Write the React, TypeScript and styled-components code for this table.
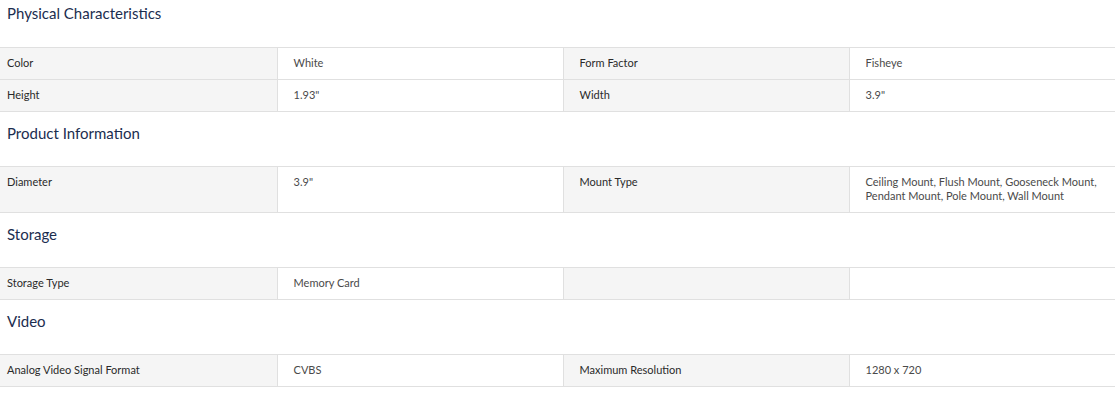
import styled, { createGlobalStyle } from 'styled-components';

interface Spec {
  label: string;
  value: string;
}

interface Section {
  title: string;
  specs: Spec[];
}

const sections: Section[] = [
  {
    title: 'Physical Characteristics',
    specs: [
      { label: 'Color', value: 'White' },
      { label: 'Form Factor', value: 'Fisheye' },
      { label: 'Height', value: '1.93"' },
      { label: 'Width', value: '3.9"' },
    ],
  },
  {
    title: 'Product Information',
    specs: [
      { label: 'Diameter', value: '3.9"' },
      {
        label: 'Mount Type',
        value: 'Ceiling Mount, Flush Mount, Gooseneck Mount, Pendant Mount, Pole Mount, Wall Mount',
      },
    ],
  },
  {
    title: 'Storage',
    specs: [{ label: 'Storage Type', value: 'Memory Card' }],
  },
  {
    title: 'Video',
    specs: [
      { label: 'Analog Video Signal Format', value: 'CVBS' },
      { label: 'Maximum Resolution', value: '1280 x 720' },
    ],
  },
];

// label / value / label / value
const columnWidths = ['24.85%', '25.65%', '25.65%', '23.85%'];

const GlobalStyle = createGlobalStyle`
  body {
    margin: 0;
    background: #fff;
    font-family: Lato, "Noto Sans", sans-serif;
  }
`;

const Wrapper = styled.div`
  width: 100%;
`;

const SectionTitle = styled.h3<{ $first?: boolean }>`
  margin: 0;
  padding: ${(p) => (p.$first ? '3px 7px 24px' : '11px 7px 23px')};
  font-size: 15px;
  line-height: 20px;
  font-weight: 400;
  color: #1b2d4f;
`;

const SpecTable = styled.table`
  width: 100%;
  border-collapse: collapse;
  table-layout: fixed;
`;

const Row = styled.tr`
  border-top: 1px solid #e0e0e0;
  border-bottom: 1px solid #e0e0e0;
`;

const Cell = styled.td<{ $label?: boolean; $edge?: boolean }>`
  padding: 8px 16px 9px ${(p) => (p.$edge ? '7px' : '16px')};
  font-size: 11px;
  line-height: 14px;
  vertical-align: top;
  color: ${(p) => (p.$label ? '#2a2a2a' : '#4a4a4a')};
  background: ${(p) => (p.$label ? '#f5f5f5' : '#fff')};
  border-left: 1px solid #e0e0e0;

  &:first-child {
    border-left: none;
  }
`;

const pairs = (specs: Spec[]) => {
  const rows: (Spec | null)[][] = [];
  for (let i = 0; i < specs.length; i += 2) {
    rows.push([specs[i], specs[i + 1] ?? null]);
  }
  return rows;
};

const App = () => {
  return (
    <Wrapper>
      <GlobalStyle />
      {sections.map((section, index) => (
        <div key={section.title}>
          <SectionTitle $first={index === 0}>{section.title}</SectionTitle>
          <SpecTable>
            <colgroup>
              {columnWidths.map((w, i) => (
                <col key={i} style={{ width: w }} />
              ))}
            </colgroup>
            <tbody>
              {pairs(section.specs).map((row, rowIndex) => (
                <Row key={rowIndex}>
                  {row.map((spec, col) => [
                    <Cell key={`l${col}`} $label $edge={col === 0}>
                      {spec?.label}
                    </Cell>,
                    <Cell key={`v${col}`}>{spec?.value}</Cell>,
                  ])}
                </Row>
              ))}
            </tbody>
          </SpecTable>
        </div>
      ))}
    </Wrapper>
  );
};

export default App;
